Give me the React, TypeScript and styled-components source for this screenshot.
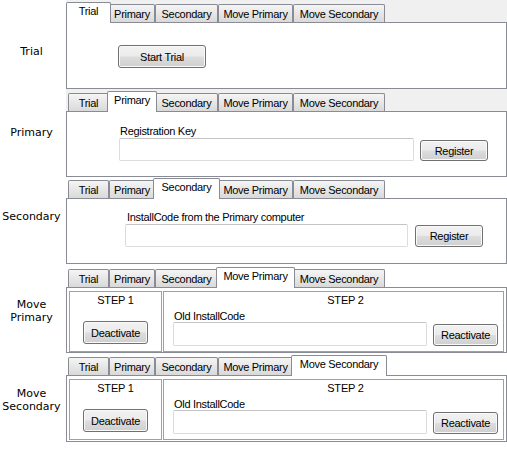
import React from "react";
import styled, { createGlobalStyle } from "styled-components";

const Global = createGlobalStyle`
  html, body { margin: 0; padding: 0; background: #ffffff; }
  body { font-family: "Liberation Sans", Arial, sans-serif; }
`;

const Page = styled.div`
  width: 507px;
  display: flex;
  flex-direction: column;
`;

const Row = styled.div`
  display: grid;
  grid-template-columns: 66px 441px;
  align-items: start;
`;

const RowLabel = styled.div<{ $top: number }>`
  width: 63px;
  padding-top: ${(p) => p.$top}px;
  text-align: center;
  font-family: "DejaVu Sans", Verdana, sans-serif;
  font-size: 11px;
  line-height: 13px;
  color: #000;
`;

const TabControl = styled.div<{ $bg: string }>`
  display: flex;
  flex-direction: column;
  background: ${(p) => p.$bg};
`;

const TabStrip = styled.div<{ $h: number }>`
  display: flex;
  align-items: flex-end;
  height: ${(p) => p.$h}px;
  padding-left: 2px;
`;

const Tab = styled.div<{ $w: number; $active?: boolean }>`
  box-sizing: border-box;
  width: ${(p) => p.$w + (p.$active ? 4 : 0)}px;
  height: ${(p) => (p.$active ? 21 : 18)}px;
  margin: ${(p) => (p.$active ? "0 -2px -1px -2px" : "0")};
  border: 1px solid #898c95;
  border-bottom: none;
  border-radius: 2px 2px 0 0;
  background: ${(p) => (p.$active ? "#ffffff" : "linear-gradient(#f5f5f5, #e4e4e4 60%, #d9d9d9)")};
  position: relative;
  z-index: ${(p) => (p.$active ? 1 : 0)};
  padding-top: ${(p) => (p.$active ? 1 : 2)}px;
  font-size: 11px;
  line-height: 14px;
  letter-spacing: -0.3px;
  text-align: center;
  white-space: nowrap;
  color: #000;
`;

const Panel = styled.div<{ $pad: string; $h: number; $flex?: boolean }>`
  box-sizing: border-box;
  height: ${(p) => p.$h}px;
  border: 1px solid #898c95;
  background: #ffffff;
  padding: ${(p) => p.$pad};
  display: flex;
  flex-direction: ${(p) => (p.$flex ? "row" : "column")};
  gap: ${(p) => (p.$flex ? 1 : 0)}px;
  align-items: flex-start;
`;

const Button = styled.button<{ $w: number; $h: number }>`
  box-sizing: border-box;
  width: ${(p) => p.$w}px;
  height: ${(p) => p.$h}px;
  border: 1px solid #707070;
  border-radius: 3px;
  background: linear-gradient(#f2f2f2 0%, #ebebeb 48%, #dddddd 52%, #cfcfcf 100%);
  box-shadow: inset 0 0 0 1px #fafafa;
  font-family: "Liberation Sans", Arial, sans-serif;
  font-size: 11px;
  letter-spacing: -0.3px;
  color: #000;
  padding: 0;
  flex: none;
`;

const FieldLabel = styled.div<{ $ml: number; $lh?: number }>`
  margin-left: ${(p) => p.$ml}px;
  font-size: 11px;
  line-height: ${(p) => p.$lh ?? 13}px;
  letter-spacing: -0.3px;
  color: #000;
  white-space: nowrap;
`;

const FieldRow = styled.div<{ $gap: number }>`
  display: flex;
  align-items: flex-end;
  gap: ${(p) => p.$gap}px;
`;

const TextBox = styled.div<{ $w: number; $h: number }>`
  box-sizing: border-box;
  width: ${(p) => p.$w}px;
  height: ${(p) => p.$h}px;
  border: 1px solid #dcdcdc;
  border-top-color: #c4c4c4;
  border-radius: 2px;
  background: #fff;
  flex: none;
`;

const GroupBox = styled.div<{ $w: number }>`
  box-sizing: border-box;
  width: ${(p) => p.$w}px;
  height: 61px;
  border: 1px solid #a0a0a0;
  display: flex;
  flex-direction: column;
`;

const GroupTitle = styled.div<{ $shift: number }>`
  padding-top: 2px;
  padding-left: ${(p) => p.$shift}px;
  font-size: 11px;
  line-height: 13px;
  letter-spacing: -0.2px;
  text-align: center;
  color: #000;
`;

const Step1Body = styled.div`
  display: flex;
  justify-content: center;
  margin-top: 14px;
`;

const Step2Body = styled.div`
  display: flex;
  flex-direction: column;
  margin-top: 3px;
  padding-left: 9px;
`;

const TABS = [
  { name: "Trial", w: 41 },
  { name: "Primary", w: 46 },
  { name: "Secondary", w: 63 },
  { name: "Move Primary", w: 75 },
  { name: "Move Secondary", w: 92 },
];

function Tabs({ active, h }: { active: string; h: number }) {
  return (
    <TabStrip $h={h}>
      {TABS.map((t) => (
        <Tab key={t.name} $w={t.w} $active={t.name === active}>
          {t.name}
        </Tab>
      ))}
    </TabStrip>
  );
}

function MovePanel({ h }: { h: number }) {
  return (
    <Panel $pad="3px 2px 1px 2px" $h={h} $flex>
      <GroupBox $w={93}>
        <GroupTitle $shift={0}>STEP 1</GroupTitle>
        <Step1Body>
          <Button $w={65} $h={23}>Deactivate</Button>
        </Step1Body>
      </GroupBox>
      <GroupBox $w={341}>
        <GroupTitle $shift={24}>STEP 2</GroupTitle>
        <Step2Body>
          <FieldLabel $ml={1} $lh={12}>Old InstallCode</FieldLabel>
          <FieldRow $gap={6}>
            <TextBox $w={254} $h={24} />
            <Button $w={65} $h={22}>Reactivate</Button>
          </FieldRow>
        </Step2Body>
      </GroupBox>
    </Panel>
  );
}

export default function App() {
  return (
    <>
      <Global />
      <Page>
        <Row>
          <RowLabel $top={45}>Trial</RowLabel>
          <TabControl $bg="#f0f0f0">
            <Tabs active="Trial" h={22} />
            <Panel $pad="22px 0 0 51px" $h={67}>
              <Button $w={88} $h={23}>Start Trial</Button>
            </Panel>
          </TabControl>
        </Row>
        <Row>
          <RowLabel $top={37}>Primary</RowLabel>
          <TabControl $bg="#f0f0f0">
            <Tabs active="Primary" h={22} />
            <Panel $pad="13px 0 0 52px" $h={66}>
              <FieldLabel $ml={1}>Registration Key</FieldLabel>
              <FieldRow $gap={6}>
                <TextBox $w={295} $h={23} />
                <Button $w={68} $h={21}>Register</Button>
              </FieldRow>
            </Panel>
          </TabControl>
        </Row>
        <Row>
          <RowLabel $top={33}>Secondary</RowLabel>
          <TabControl $bg="#ffffff">
            <Tabs active="Secondary" h={21} />
            <Panel $pad="12px 0 0 58px" $h={66}>
              <FieldLabel $ml={2}>InstallCode from the Primary computer</FieldLabel>
              <FieldRow $gap={7}>
                <TextBox $w={283} $h={23} />
                <Button $w={68} $h={22}>Register</Button>
              </FieldRow>
            </Panel>
          </TabControl>
        </Row>
        <Row>
          <RowLabel $top={34}>
            Move
            <br />
            Primary
          </RowLabel>
          <TabControl $bg="#ffffff">
            <Tabs active="Move Primary" h={23} />
            <MovePanel h={66} />
          </TabControl>
        </Row>
        <Row>
          <RowLabel $top={34}>
            Move
            <br />
            Secondary
          </RowLabel>
          <TabControl $bg="#ffffff">
            <Tabs active="Move Secondary" h={22} />
            <MovePanel h={67} />
          </TabControl>
        </Row>
      </Page>
    </>
  );
}
